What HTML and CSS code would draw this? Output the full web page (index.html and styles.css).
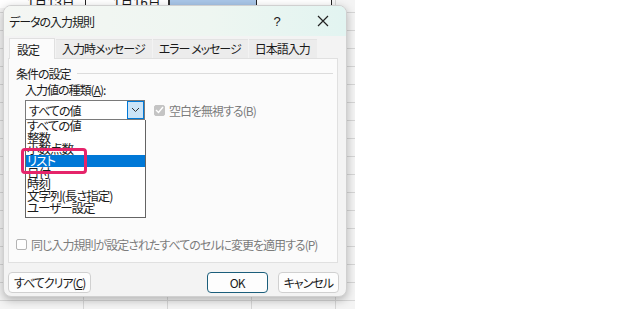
FILE: index.html
```html
<!DOCTYPE html>
<html>
<head lang="ja">
    <meta charset="UTF-8">
    <title>データの入力規則</title>
    <link rel="stylesheet" href="styles.css">
</head>
<body>
<div id="sheet">
    <div class="toprow">
        <span class="cell c1">1月13日</span>
        <span class="cell c2">1月16日</span>
        <span class="cell c3"></span>
        <span class="cell c4"></span>
    </div>

    <div id="dialog">
        <div class="titlebar">
            <span class="title">データの入力規則</span>
            <span class="help">?</span>
            <span class="close">
                <svg width="12" height="12" viewBox="0 0 12 12"><path d="M1 1L11 11M11 1L1 11" stroke="#222" stroke-width="1.2" fill="none"/></svg>
            </span>
        </div>

        <ul class="tabs">
            <li class="active">設定</li>
            <li>入力時メッセージ</li>
            <li>エラー メッセージ</li>
            <li>日本語入力</li>
        </ul>

        <div class="panel">
            <div class="group">
                <span>条件の設定</span>
                <i class="rule"></i>
            </div>
            <div class="field">
                <p class="label">入力値の種類(<u>A</u>):</p>
                <div class="selectrow">
                    <div class="combo">
                        <div class="select">
                            <span>すべての値</span>
                            <span class="drop">
                                <svg width="9" height="6" viewBox="0 0 9 6"><path d="M1 1L4.5 4.5L8 1" stroke="#333" stroke-width="1" fill="none"/></svg>
                            </span>
                        </div>
                        <ul class="listbox">
                            <li>すべての値</li>
                            <li>整数</li>
                            <li>小数点数</li>
                            <li class="picked">リスト</li>
                            <li>日付</li>
                            <li>時刻</li>
                            <li>文字列(長さ指定)</li>
                            <li>ユーザー設定</li>
                        </ul>
                        <div class="mark"></div>
                    </div>
                    <label class="check grey">
                        <span class="box on">
                            <svg width="9" height="8" viewBox="0 0 9 8"><path d="M1 4L3.5 6.5L8 1" stroke="#fff" stroke-width="1.4" fill="none"/></svg>
                        </span>
                        空白を無視する(B)
                    </label>
                </div>
            </div>
            <label class="check grey apply">
                <span class="box"></span>
                同じ入力規則が設定されたすべてのセルに変更を適用する(P)
            </label>
        </div>

        <div class="buttons">
            <button class="btn">すべてクリア(<u>C</u>)</button>
            <span class="spacer"></span>
            <button class="btn ok">OK</button>
            <button class="btn">キャンセル</button>
        </div>
    </div>
</div>
</body>
</html>
```
FILE: styles.css
```css
* {
    margin: 0;
    padding: 0;
    box-sizing: border-box;
}

ul {
    list-style: none;
}

body {
    background: #fff;
    font-family: "Noto Sans CJK JP", "Noto Sans", sans-serif;
    font-size: 12px;
    font-feature-settings: "palt";
    letter-spacing: -1px;
    color: #1a1a1a;
}

#sheet {
    width: 355px;
    height: 309px;
    position: relative;
    overflow: hidden;
    background-color: #f4f4f4;
    background-image:
        repeating-linear-gradient(to bottom, transparent 0, transparent 12px, #d6d6d6 12px, #d6d6d6 13px, transparent 13px, transparent 18px),
        repeating-linear-gradient(to right, transparent 0, transparent 83px, #d6d6d6 83px, #d6d6d6 84px);
}

.toprow {
    display: flex;
    line-height: 1;
}

.cell {
    height: 12px;
    margin-top: -4px;
    font-size: 13px;
    letter-spacing: 0;
    font-family: "Liberation Sans", "Noto Sans CJK JP", sans-serif;
    overflow: hidden;
    border-right: 1px solid #222;
    background: #fff;
}

.cell.c1 { width: 86px; padding-left: 27px; }
.cell.c2 { width: 84px; padding-left: 27px; border-right: 2px solid #333; }
.cell.c3 { width: 87px; background: #a9c6e8; }
.cell.c4 { width: 75px; }

#dialog {
    position: absolute;
    left: 3px;
    top: 5px;
    width: 344px;
    height: 292px;
    border-radius: 8px;
    background: #f3f3f3;
    border: 1px solid #d0d0d0;
    box-shadow: 0 3px 10px rgba(0, 0, 0, 0.28);
    display: flex;
    flex-direction: column;
    overflow: hidden;
}

.titlebar {
    height: 30px;
    display: flex;
    align-items: center;
    padding-left: 5px;
    background: linear-gradient(to right, #f4f6f3 0%, #eef6f1 60%, #e2f4f1 100%);
}

.title {
    flex: 1;
}

.help {
    width: 46px;
    text-align: center;
    font-family: "Liberation Sans", sans-serif;
    font-size: 13px;
    letter-spacing: 0;
}

.close {
    width: 46px;
    display: flex;
    justify-content: center;
}

.tabs {
    display: flex;
    margin: 2px 0 0 5px;
    height: 20px;
    align-items: flex-end;
}

.tabs li {
    height: 19px;
    line-height: 18px;
    padding: 0 7px 0 6px;
    margin-right: 1px;
    background: #ececec;
    border-top: 1px solid #e3e3e3;
}

.tabs li.active {
    height: 21px;
    line-height: 21px;
    width: 46px;
    padding: 0 0 0 7px;
    background: #fbfbfb;
    border: 1px solid #e0e0e0;
    border-bottom: none;
    position: relative;
    top: 1px;
}

.panel {
    margin: 0 8px 0 4px;
    height: 205px;
    background: #fbfbfb;
    border: 1px solid #e0e0e0;
    padding: 5px 4px 0 7px;
}

.group {
    display: flex;
    align-items: center;
    height: 19px;
}

.group .rule {
    flex: 1;
    height: 1px;
    background: #dcdcdc;
    margin-left: 6px;
}

.field {
    padding-left: 9px;
}

.label {
    height: 14px;
    line-height: 14px;
}

.selectrow {
    display: flex;
    margin-top: 3px;
}

.combo {
    width: 121px;
    position: relative;
}

.select {
    height: 20px;
    width: 120px;
    border: 1px solid #7a7a7a;
    background: #fff;
    display: flex;
    align-items: center;
    padding-left: 3px;
}

.select span:first-child {
    flex: 1;
}

.drop {
    width: 17px;
    height: 18px;
    background: #cce4f7;
    border: 1px solid #0078d7;
    display: flex;
    align-items: center;
    justify-content: center;
}

.listbox {
    width: 121px;
    height: 98px;
    border: 1px solid #646464;
    border-top: none;
    background: #fff;
}

.listbox li {
    height: 11.7px;
    line-height: 11.7px;
    font-size: 12.5px;
    padding-left: 1px;
    white-space: nowrap;
}

.listbox li.picked {
    background: #0078d7;
    color: #fff;
}

.mark {
    position: absolute;
    left: -4px;
    top: 48px;
    width: 66px;
    height: 26px;
    border: 3px solid #e5246a;
    border-radius: 4px;
}

.check {
    display: flex;
    align-items: center;
    height: 14px;
    white-space: nowrap;
}

.grey {
    color: #7c7c7c;
}

.selectrow .check {
    margin: 3px 0 0 8px;
}

.box {
    flex-shrink: 0;
    width: 11px;
    height: 11px;
    border: 1px solid #b4b4b4;
    border-radius: 2px;
    background: #fff;
    margin-right: 4px;
    display: flex;
    align-items: center;
    justify-content: center;
}

.box.on {
    background: #c4c4c4;
    border-color: #c4c4c4;
}

.apply {
    margin-top: 19px;
}

.buttons {
    display: flex;
    padding: 9px 7px 0 4px;
    gap: 10px;
}

.spacer {
    flex: 1;
}

.btn {
    height: 21px;
    min-width: 61px;
    padding: 0 5px;
    font-family: inherit;
    font-size: 12px;
    font-feature-settings: "palt";
    letter-spacing: -1px;
    background: #fdfdfd;
    border: 1px solid #d0d0d0;
    border-radius: 4px;
    color: #1a1a1a;
}

.btn.ok {
    border: 1px solid #1b5e7b;
}
```
